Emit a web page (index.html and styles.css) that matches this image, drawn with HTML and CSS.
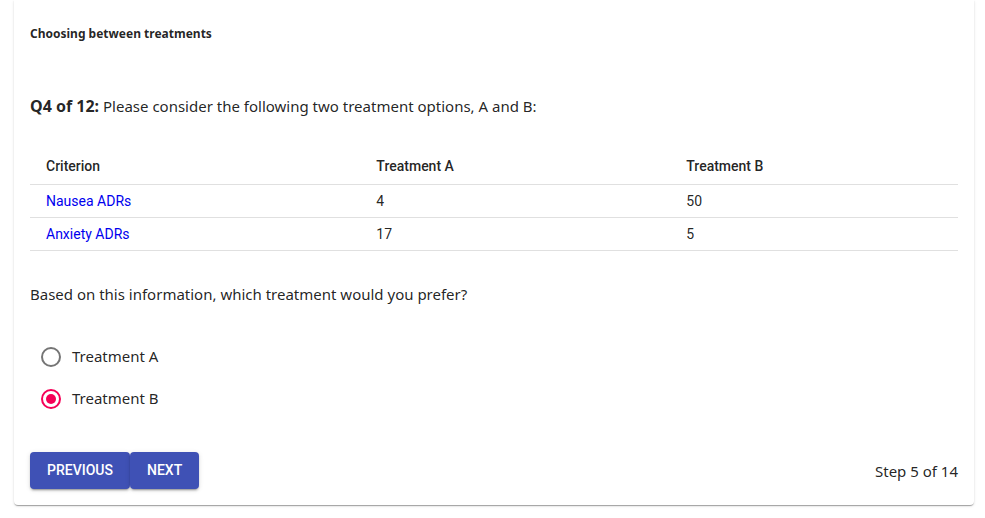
FILE: index.html
```html
<!DOCTYPE html>
<html lang="en">
<head>
<meta charset="utf-8">
<meta name="viewport" content="width=device-width, initial-scale=1">
<title>Choosing between treatments</title>
<link rel="stylesheet" href="styles.css">
</head>
<body>
<main class="card">
  <h1 class="title">Choosing between treatments</h1>
  <p class="question"><strong>Q4 of 12:</strong> Please consider the following two treatment options, A and B:</p>
  <table class="options">
    <colgroup><col class="col-criterion"><col class="col-a"><col class="col-b"></colgroup>
    <thead>
      <tr><th scope="col">Criterion</th><th scope="col">Treatment A</th><th scope="col">Treatment B</th></tr>
    </thead>
    <tbody>
      <tr><td><a href="#nausea">Nausea ADRs</a></td><td>4</td><td>50</td></tr>
      <tr><td><a href="#anxiety">Anxiety ADRs</a></td><td>17</td><td>5</td></tr>
    </tbody>
  </table>
  <form class="answer">
    <p class="prompt" id="prompt">Based on this information, which treatment would you prefer?</p>
    <div class="choices" role="radiogroup" aria-labelledby="prompt">
      <label class="choice"><input type="radio" name="treatment" value="a"><span>Treatment A</span></label>
      <label class="choice"><input type="radio" name="treatment" value="b" checked><span>Treatment B</span></label>
    </div>
    <div class="footer">
      <div class="buttons">
        <button type="button">PREVIOUS</button>
        <button type="button">NEXT</button>
      </div>
      <span class="step">Step 5 of 14</span>
    </div>
  </form>
</main>
</body>
</html>
```
FILE: styles.css
```css
* {
  box-sizing: border-box;
}

body {
  min-height: 100vh;
  margin: 0;
  padding: 0 11px 12px 14px;
  background: #fff;
  color: rgba(0, 0, 0, 0.87);
  font-family: "Segoe UI", "Noto Sans", sans-serif;
  font-size: 15px;
  line-height: 24px;
}

.card {
  padding: 24px 16px 16px;
  border-radius: 0 0 4px 4px;
  background: #fff;
  box-shadow: 0 2px 1px -1px rgba(0, 0, 0, 0.2), 0 1px 1px rgba(0, 0, 0, 0.14), 0 1px 3px rgba(0, 0, 0, 0.12);
}

.title {
  margin: 0 0 50px;
  font-size: 12px;
  font-weight: 700;
  line-height: 20px;
}

.question,
.prompt {
  margin: 0;
}

.question strong {
  font-size: 16px;
}

.options {
  width: 100%;
  margin: 30px 0 31px;
  border-collapse: collapse;
  table-layout: fixed;
  font-family: Roboto, sans-serif;
  font-size: 14px;
}

.col-criterion {
  width: 35.6%;
}

.col-a {
  width: 33.4%;
}

.options th,
.options td {
  padding: 6px 16px;
  border-bottom: 1px solid #e0e0e0;
  text-align: left;
  line-height: 20px;
  font-weight: 400;
}

.options th {
  padding: 8px 16px;
  font-weight: 500;
}

.options a {
  color: #0000ee;
  text-decoration: none;
}

.choices {
  display: flex;
  flex-direction: column;
  margin-top: 30px;
}

.choice {
  display: flex;
  align-items: center;
  align-self: flex-start;
  gap: 11px;
  height: 42px;
  padding-left: 11px;
  cursor: pointer;
}

.choice span {
  padding-bottom: 2px;
}

.choice input {
  appearance: none;
  display: grid;
  place-items: center;
  width: 20px;
  height: 20px;
  margin: 0;
  border: 2px solid #757575;
  border-radius: 50%;
}

.choice input:checked {
  border-color: #f50057;
}

.choice input:checked::before {
  content: "";
  width: 10px;
  height: 10px;
  border-radius: 50%;
  background: #f50057;
}

.footer {
  display: flex;
  align-items: center;
  justify-content: space-between;
  margin-top: 32px;
}

.buttons {
  display: flex;
}

button {
  padding: 6px 17px;
  border: 0;
  border-radius: 4px;
  background: #3f51b5;
  color: #fff;
  font: 500 14px/25px Roboto, sans-serif;
  box-shadow: 0 3px 1px -2px rgba(0, 0, 0, 0.2), 0 2px 2px rgba(0, 0, 0, 0.14), 0 1px 5px rgba(0, 0, 0, 0.12);
  cursor: pointer;
}
```
